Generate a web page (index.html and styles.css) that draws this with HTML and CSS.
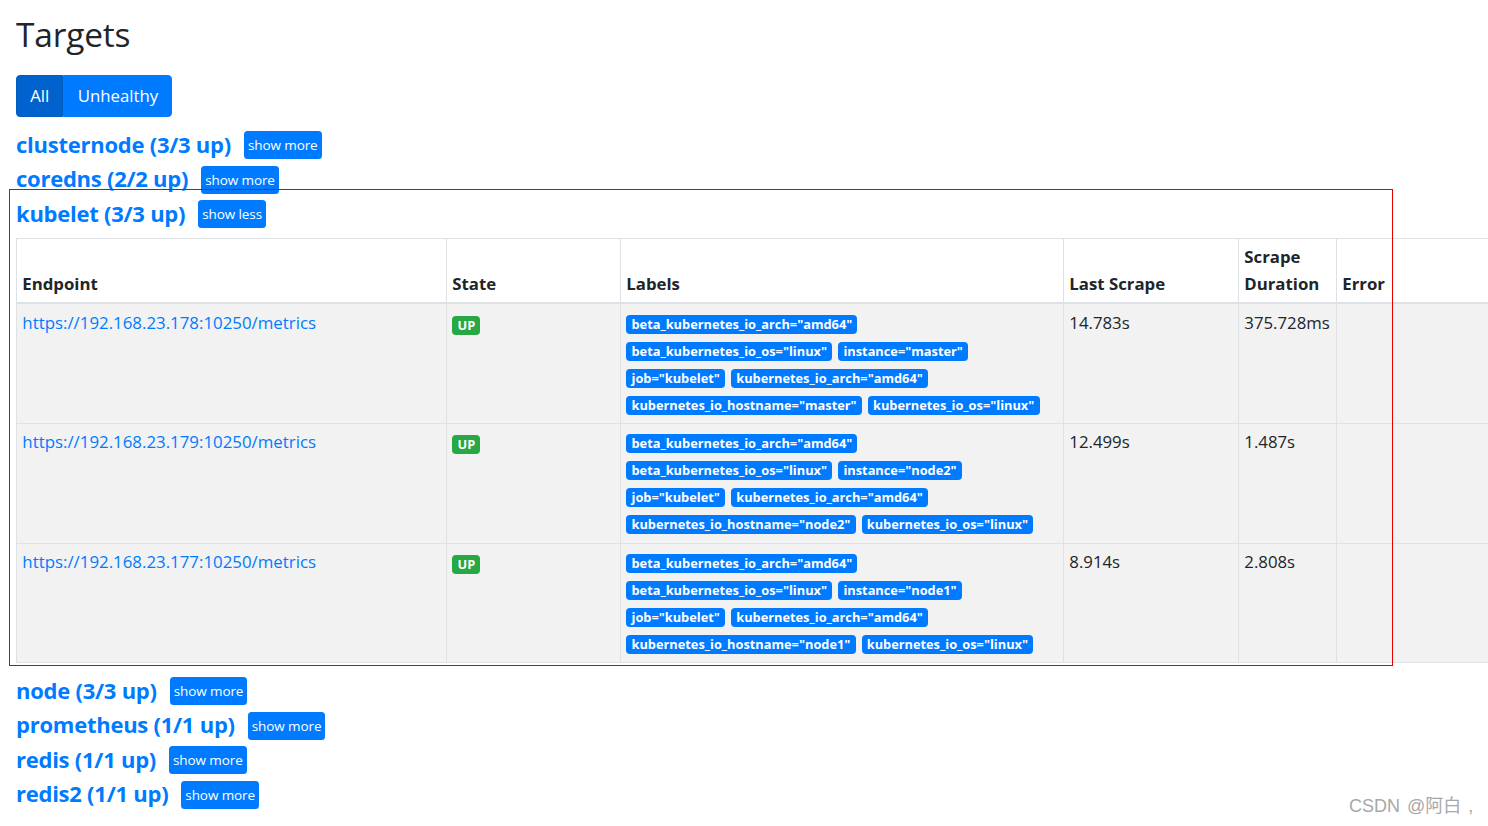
FILE: index.html
```html
<!DOCTYPE html>
<html lang="en">
<head>
<meta charset="utf-8">
<title>Targets</title>
<link rel="stylesheet" href="styles.css">
</head>
<body>
<div class="page">
  <h1 class="title">Targets</h1>
  <div class="btn-group">
    <button class="btn btn-active">All</button>
    <button class="btn">Unhealthy</button>
  </div>

  <div class="pools">
    <div class="pool"><a class="pool-name">clusternode (3/3 up)</a><button class="btn-sm">show more</button></div>
    <div class="pool"><a class="pool-name">coredns (2/2 up)</a><button class="btn-sm">show more</button></div>
    <div class="pool"><a class="pool-name">kubelet (3/3 up)</a><button class="btn-sm">show less</button></div>
  </div>

  <table class="targets">
    <colgroup>
      <col class="c-endpoint"><col class="c-state"><col class="c-labels"><col class="c-last"><col class="c-dur"><col class="c-err">
    </colgroup>
    <thead>
      <tr><th>Endpoint</th><th>State</th><th>Labels</th><th>Last Scrape</th><th>Scrape Duration</th><th>Error</th></tr>
    </thead>
    <tbody>
      <tr>
        <td><a class="endpoint">https://192.168.23.178:10250/metrics</a></td>
        <td><span class="badge badge-up">UP</span></td>
        <td class="labels"><span class="badge">beta_kubernetes_io_arch="amd64"</span><span class="badge">beta_kubernetes_io_os="linux"</span><span class="badge">instance="master"</span><span class="badge">job="kubelet"</span><span class="badge">kubernetes_io_arch="amd64"</span><span class="badge">kubernetes_io_hostname="master"</span><span class="badge">kubernetes_io_os="linux"</span></td>
        <td>14.783s</td>
        <td>375.728ms</td>
        <td></td>
      </tr>
      <tr>
        <td><a class="endpoint">https://192.168.23.179:10250/metrics</a></td>
        <td><span class="badge badge-up">UP</span></td>
        <td class="labels"><span class="badge">beta_kubernetes_io_arch="amd64"</span><span class="badge">beta_kubernetes_io_os="linux"</span><span class="badge">instance="node2"</span><span class="badge">job="kubelet"</span><span class="badge">kubernetes_io_arch="amd64"</span><span class="badge">kubernetes_io_hostname="node2"</span><span class="badge">kubernetes_io_os="linux"</span></td>
        <td>12.499s</td>
        <td>1.487s</td>
        <td></td>
      </tr>
      <tr>
        <td><a class="endpoint">https://192.168.23.177:10250/metrics</a></td>
        <td><span class="badge badge-up">UP</span></td>
        <td class="labels"><span class="badge">beta_kubernetes_io_arch="amd64"</span><span class="badge">beta_kubernetes_io_os="linux"</span><span class="badge">instance="node1"</span><span class="badge">job="kubelet"</span><span class="badge">kubernetes_io_arch="amd64"</span><span class="badge">kubernetes_io_hostname="node1"</span><span class="badge">kubernetes_io_os="linux"</span></td>
        <td>8.914s</td>
        <td>2.808s</td>
        <td></td>
      </tr>
    </tbody>
  </table>

  <div class="pools pools-after">
    <div class="pool"><a class="pool-name">node (3/3 up)</a><button class="btn-sm">show more</button></div>
    <div class="pool"><a class="pool-name">prometheus (1/1 up)</a><button class="btn-sm">show more</button></div>
    <div class="pool"><a class="pool-name">redis (1/1 up)</a><button class="btn-sm">show more</button></div>
    <div class="pool"><a class="pool-name">redis2 (1/1 up)</a><button class="btn-sm">show more</button></div>
  </div>
</div>
<div class="highlight"></div>
<div class="watermark">CSDN @阿白 ,</div>
</body>
</html>
```

FILE: styles.css
```css
html, body {
  margin: 0;
  padding: 0;
  background: #fff;
  overflow: hidden;
}
body {
  font-family: "Open Sans", "Noto Sans", sans-serif;
  color: #212529;
  font-size: 16.8px;
  line-height: 26.4px;
  width: 1488px;
  height: 826px;
  position: relative;
}
.page {
  padding: 13px 0 0 16px;
}
.title {
  margin: 0;
  font-size: 33.5px;
  line-height: 42px;
  font-weight: 500;
  letter-spacing: -0.2px;
}
.btn-group {
  display: flex;
  margin-top: 20px;
  height: 42px;
}
.btn {
  font-family: inherit;
  font-size: 16.8px;
  line-height: 26.4px;
  color: #fff;
  background: #007bff;
  border: 1px solid #007bff;
  padding: 6.6px 13.2px;
  margin: 0;
}
.btn:first-child {
  border-radius: 4px 0 0 4px;
}
.btn:last-child {
  border-radius: 0 4px 4px 0;
}
.btn-active {
  background: #0062cc;
  border-color: #005cbf;
}
.pools {
  margin-top: 11px;
}
.pools-after {
  margin-top: 11px;
}
.pool {
  display: flex;
  align-items: center;
  height: 34.5px;
}
.pool-name {
  color: #007bff;
  font-weight: 700;
  font-size: 22px;
  letter-spacing: -0.25px;
  line-height: 28px;
  margin-right: 13px;
  margin-top: -3px;
}
.btn-sm {
  font-family: inherit;
  font-size: 13.5px;
  letter-spacing: -0.1px;
  line-height: 20px;
  color: #fff;
  background: #007bff;
  border: 0;
  border-radius: 3.5px;
  padding: 4px 4px;
  height: 28px;
  margin: 0;
}
.targets {
  margin-top: 6.5px;
  width: 1600px;
  table-layout: fixed;
  border-collapse: collapse;
}
.c-endpoint { width: 430px; }
.c-state { width: 174px; }
.c-labels { width: 443px; }
.c-last { width: 175px; }
.c-dur { width: 98px; }
.c-err { width: 280px; }
.targets th,
.targets td {
  border: 1px solid #dee2e6;
  padding: 5.3px;
  text-align: left;
}
.targets th {
  vertical-align: bottom;
  border-bottom-width: 2px;
  font-weight: 700;
  background: #fff;
  line-height: 26.4px;
}
.targets td {
  vertical-align: top;
  background: #f2f2f2;
}
.targets tbody tr td {
  height: 107px;
}
.endpoint {
  color: #007bff;
  font-size: 16.85px;
}
.labels {
  line-height: 27px;
}
.badge {
  display: inline-block;
  background: #007bff;
  color: #fff;
  font-weight: 700;
  font-size: 12.8px;
  line-height: 13px;
  padding: 3px 5.2px 3px;
  border-radius: 4px;
  margin-right: 6px;
  vertical-align: 1px;
  white-space: nowrap;
}
.badge-up {
  background: #28a745;
  margin-top: 6px;
}
.highlight {
  position: absolute;
  left: 9px;
  top: 189px;
  width: 1382px;
  height: 475px;
  border: 1px solid #e50000;
  pointer-events: none;
}
.watermark {
  position: absolute;
  left: 1349px;
  top: 795px;
  font-family: "Liberation Sans", "Noto Sans CJK SC", sans-serif;
  font-size: 18px;
  color: #a8a8a8;
  line-height: 22px;
  word-spacing: 2px;
}
```
